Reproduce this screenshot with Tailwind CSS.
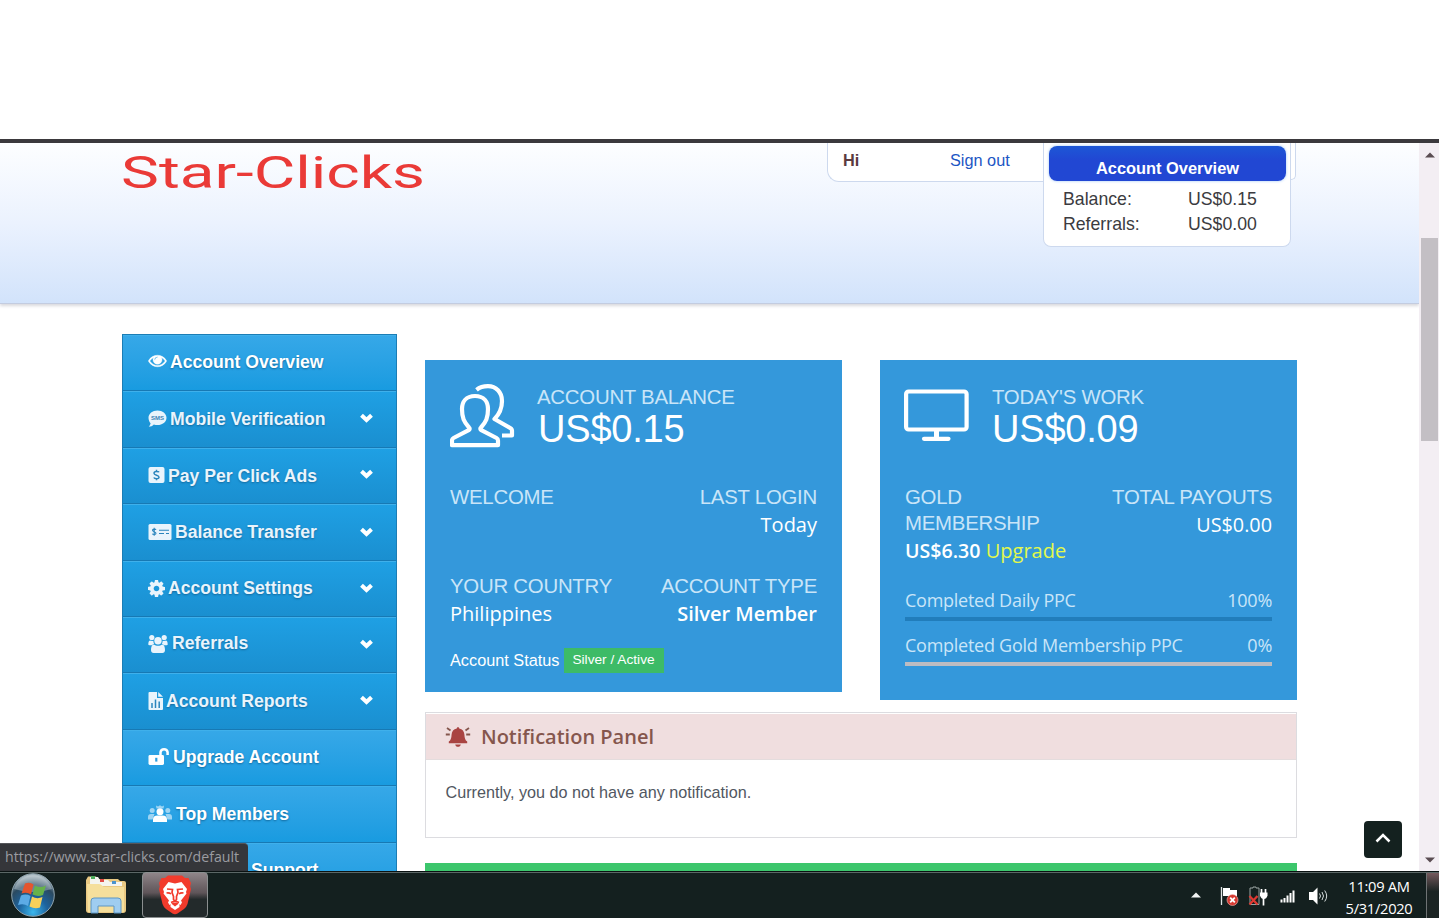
<!DOCTYPE html>
<html lang="en">
<head>
<meta charset="utf-8">
<title>Star-Clicks</title>
<script src="https://cdn.jsdelivr.net/npm/@tailwindcss/browser@4"></script>
</head>
<body class="w-[1439px] h-[918px] overflow-hidden bg-white flex flex-col font-['Liberation_Sans',sans-serif]">
<div class="h-[139px] shrink-0"></div>
<div class="h-1 shrink-0 bg-[#3b393d]"></div>

<div class="h-[728px] shrink-0 flex overflow-hidden relative">
  <div class="w-[1419px] shrink-0 h-full overflow-hidden">
    <!-- header -->
    <header class="h-[161px] border-b border-[#c3cce0] bg-linear-to-b from-[#fdfeff] via-[#ebf2fe] to-[#d2e3fb] shadow-[0_2px_3px_#d9d9de] pl-[122px] flex">
      <svg class="w-[306px] h-[50px] mt-1 shrink-0" viewBox="0 0 306 50"><text x="-1" y="40.500" textLength="304" lengthAdjust="spacingAndGlyphs" font-family="Roboto, sans-serif" font-size="44" font-weight="400" fill="#ea3a37">Star-Clicks</text></svg>
      <div class="ml-[399px] w-[216px] h-[39px] border-l border-b border-[#cdd9ee] rounded-bl-xl bg-white flex pl-[15px] text-[16.3px] leading-[35px]">
        <b class="text-[#5b3a40] w-[107px]">Hi</b><a class="text-[#1d56c4]">Sign out</a>
      </div>
      <div class="w-[248px] h-[104px] border-x border-b border-[#cdd9ee] rounded-b-lg bg-white pl-[5px] pr-1 pt-[3px] text-[17.7px] text-[#3b3b40]">
        <div class="h-[35px] rounded-lg bg-linear-to-b from-[#1d57d6] to-[#2147d3] to-40% shadow-[0_0_3px_#9cc6f5] text-white font-bold text-[16.4px] leading-[44px] text-center">Account Overview</div>
        <div class="pl-[14px] pt-[6px] leading-[25px]">
          <div class="flex"><span class="w-[125px]">Balance:</span><span>US$0.15</span></div>
          <div class="flex"><span class="w-[125px]">Referrals:</span><span>US$0.00</span></div>
        </div>
      </div>
      <div class="w-[5px] h-[37px] border-r border-b border-[#cdd9ee] rounded-br-lg bg-white"></div>
    </header>

    <div class="flex pl-[122px]">
      <!-- sidebar -->
      <nav class="w-[275px] mt-[30px] shrink-0 border border-b-0 border-[#1b7db5] text-[17.600px] font-bold text-white [text-shadow:0_1px_2px_#136a9f] *:h-[56.4px] *:border-b *:border-[#1779b4] *:pl-[25px] *:pr-[23px] *:flex *:items-center *:shadow-[inset_0_1px_0_#3fb0eb] *:bg-linear-to-b">
        <div class="from-[#36a8e8] to-[#189be0] pb-[2px]"><svg class="w-[19px] h-[18px] mr-[3px] mb-px" viewBox="0 64 1792 1792" fill="#fff" stroke="#fff" stroke-width="40"><path d="M1664 960q-152-236-381-353 61 104 61 225 0 185-131.500 316.500t-316.500 131.500-316.500-131.500-131.500-316.500q0-121 61-225-229 117-381 353 133 205 333.500 326.500t434.500 121.500 434.500-121.500 333.500-326.500zm-720-384q0-20-14-34t-34-14q-125 0-214.500 89.500t-89.500 214.500q0 20 14 34t34 14 34-14 14-34q0-86 61-147t147-61q20 0 34-14t14-34zm848 384q0 34-20 69-140 230-376.500 368.500t-499.500 138.500-499.500-139-376.500-368q-20-35-20-69t20-69q140-229 376.500-368t499.500-139 499.500 139 376.500 368q20 35 20 69z"/><circle cx="960" cy="880" r="260"/></svg>Account Overview</div>
        <div class="from-[#1fa0e4] to-[#1a8fd0] text-[#e9f4fc]"><svg class="w-[19px] h-[18px] mr-[3px]" viewBox="0 0 19 18"><path fill="#e9f4fc" d="M9.500.500C14.500.500 18.500 3.600 18.500 7.800s-4 7.300-9 7.300c-1.300 0-2.600-.2-3.700-.6C4.500 16 2.800 16.600.8 16.800c.9-1 1.600-2.200 1.800-3.500C1.300 12 .5 9.900.5 7.800.5 3.600 4.500.5 9.500.5z"/><text x="9.600" y="10" text-anchor="middle" font-size="6" font-weight="700" fill="#3b82b5" style="text-shadow:none">SMS</text></svg>Mobile Verification<svg class="w-[13px] h-[10px] ml-auto -mt-[3px]" viewBox="0 0 13 10"><path d="M1.500 2.200L6.500 7 11.500 2.200" fill="none" stroke="#fff" stroke-width="4"/></svg></div>
        <div class="from-[#1fa0e4] to-[#1a8fd0] text-[#e9f4fc]"><svg class="w-[17px] h-[18px] mr-[3px]" viewBox="0 0 17 18"><rect x=".5" y="1" width="16" height="16" rx="2" fill="#e9f4fc"/><path d="M11 6.300C10.500 5.200 6 4.800 6 7.200S11 9 11 11.200 6.500 13 5.800 11.500M8.500 3.800v1.500M8.500 12.500v1.700" fill="none" stroke="#2b85bd" stroke-width="1.500"/></svg><span class="pt-px">Pay Per Click Ads</span><svg class="w-[13px] h-[10px] ml-auto -mt-[3px]" viewBox="0 0 13 10"><path d="M1.500 2.200L6.500 7 11.500 2.200" fill="none" stroke="#fff" stroke-width="4"/></svg></div>
        <div class="from-[#1fa0e4] to-[#1a8fd0] text-[#e9f4fc]"><svg class="w-[24px] h-[18px] mr-[3px]" viewBox="0 0 24 18"><rect x=".5" y="1" width="23" height="16" rx="1.500" fill="#e9f4fc"/><path d="M8 6.800C7.500 5.700 4.500 6 4.500 7.300S8 8.700 8 10.200 5 11.800 4.300 10.800M6.200 4.800v8M11 7.300h10M11 10.500h5M18 10.500h3" fill="none" stroke="#2b85bd" stroke-width="1.100"/></svg>Balance Transfer<svg class="w-[13px] h-[10px] ml-auto" viewBox="0 0 13 10"><path d="M1.500 2.200L6.500 7 11.500 2.200" fill="none" stroke="#fff" stroke-width="4"/></svg></div>
        <div class="from-[#1fa0e4] to-[#1a8fd0] text-[#e9f4fc]"><svg class="w-[17px] h-[17px] mr-[3px]" viewBox="128 128 1536 1536" fill="#e9f4fc"><path d="M1152 896q0-106-75-181t-181-75-181 75-75 181 75 181 181 75 181-75 75-181zm512-109v222q0 12-8 23t-20 13l-185 28q-19 54-39 91 35 50 107 138 10 12 10 25t-9 23q-27 37-99 108t-94 71q-12 0-26-9l-138-108q-44 23-91 38-16 136-29 186-7 28-36 28h-222q-14 0-24.500-8.500t-11.500-21.500l-28-184q-49-16-90-37l-141 107q-10 9-25 9-14 0-25-11-126-114-165-168-7-10-7-23 0-12 8-23 15-21 51-66.500t54-70.500q-27-50-41-99l-183-27q-13-2-21-12.500t-8-23.500v-222q0-12 8-23t19-13l186-28q14-46 39-92-40-57-107-138-10-12-10-24 0-10 9-23 26-36 98.500-107.500t94.500-71.500q13 0 26 10l138 107q44-23 91-38 16-136 29-186 7-28 36-28h222q14 0 24.500 8.500t11.500 21.500l28 184q49 16 90 37l142-107q9-9 24-9 13 0 25 10 129 119 165 170 7 8 7 22 0 12-8 23-15 21-51 66.500t-54 70.500q26 50 41 98l183 28q13 2 21 12.500t8 23.500z"/></svg>Account Settings<svg class="w-[13px] h-[10px] ml-auto" viewBox="0 0 13 10"><path d="M1.500 2.200L6.500 7 11.500 2.200" fill="none" stroke="#fff" stroke-width="4"/></svg></div>
        <div class="from-[#1fa0e4] to-[#1a8fd0] text-[#e9f4fc] pb-[2px]"><svg class="w-[20px] h-[20px] mr-[4px]" viewBox="0 0 20 20" fill="#e9f4fc"><circle cx="3.800" cy="3.600" r="2.600"/><circle cx="16.200" cy="3.600" r="2.600"/><path d="M.3 10.500C.3 8 1 6.500 2.200 6.500c1.300.8 2.500.6 3.200.2 0 1.300.2 2.500 1 3.300-1 .1-1.700.5-2.300 1.200H1.500c-.8 0-1.200-.3-1.200-.7zM19.700 10.500c0-2.500-.7-4-1.900-4-1.300.8-2.500.6-3.200.2 0 1.300-.2 2.500-1 3.300 1 .1 1.700.5 2.300 1.200h2.600c.8 0 1.200-.3 1.200-.7z"/><circle cx="10" cy="6.800" r="3.700"/><path d="M5.800 10.500c2.500 1.800 6 1.800 8.400 0 2 .2 2.800 2.600 2.800 5.600 0 1.800-1 2.900-2.600 2.900H5.600C4 19 3 17.900 3 16.100c0-3 .8-5.400 2.800-5.600z"/></svg>Referrals<svg class="w-[13px] h-[10px] ml-auto" viewBox="0 0 13 10"><path d="M1.500 2.200L6.500 7 11.500 2.200" fill="none" stroke="#fff" stroke-width="4"/></svg></div>
        <div class="from-[#1fa0e4] to-[#1a8fd0] text-[#e9f4fc]"><svg class="w-[15px] h-[18px] mr-[3px] -mt-px" viewBox="0 0 15 18"><path fill="#e9f4fc" d="M1.500 0H9v6h6v11q0 1-1 1H1.500Q.5 18 .5 17V1q0-1 1-1zM10.200 0L15 4.800h-4.800z"/><path d="M4 16v-5M7.500 16V7.500M11.200 16V9.500" stroke="#2b85bd" stroke-width="1.500"/></svg>Account Reports<svg class="w-[13px] h-[10px] ml-auto -mt-[3px]" viewBox="0 0 13 10"><path d="M1.500 2.200L6.500 7 11.500 2.200" fill="none" stroke="#fff" stroke-width="4"/></svg></div>
        <div class="from-[#36a8e8] to-[#189be0]"><svg class="w-[21px] h-[20px] mr-[4px] -mt-[2px]" viewBox="0 0 21 20"><path d="M12.500 10V6.300a3.600 3.600 0 017.100 0V9" fill="none" stroke="#fff" stroke-width="2.500"/><rect x=".5" y="9" width="15.500" height="10" rx="1.400" fill="#fff"/><path d="M8.300 11.800v3.800" stroke="#2b9ddf" stroke-width="2.200"/></svg>Upgrade Account</div>
        <div class="from-[#36a8e8] to-[#189be0]"><svg class="w-[24px] h-[18px] mr-[4px]" viewBox="0 0 24 18"><g fill="#fff" fill-opacity=".55"><circle cx="4.200" cy="5.500" r="2.500"/><circle cx="19.800" cy="5.500" r="2.500"/><path d="M0 14.500V12q0-3 3-3h3.500l-2 5.500zM24 14.500V12q0-3-3-3h-3.500l2 5.500zM8 .5l2 1 2-1.200 2 1.200 2-1-.5 3h-7z"/></g><circle cx="12" cy="6.700" r="3.500" fill="#fff"/><path fill="#fff" d="M5 17v-2.500Q5 10.500 9.500 10.500h5q4.500 0 4.500 4V17z"/></svg>Top Members</div>
        <div class="from-[#36a8e8] to-[#189be0]"><span class="w-[103px]"></span>Support</div>
      </nav>

      <!-- content -->
      <main class="ml-[28px] w-[872px] mt-[56px] shrink-0">
        <div class="flex justify-between items-start">
          <section class="w-[417px] h-[332px] bg-[#3498db] px-[25px] pt-6 text-white">
            <div class="flex h-[99px]">
              <svg class="w-[65px] h-[65px] shrink-0" viewBox="0 0 65 65" fill="none" stroke="#fff" stroke-width="4.200" stroke-linejoin="round"><path d="M25 12C16 12 12 18 12 25c0 9 2 13 7 18.500 1 1 .8 2-.3 2.700L3.500 54q-1.500.8-1.500 2.500V61.200h46V56.500q0-1.700-1.500-2.500L31.300 46.200c-1.100-.7-1.300-1.700-.3-2.700C36 38 38 34 38 25 38 18 34 12 25 12z"/><path d="M26.500 5.800C30 3 34 2.200 38 2.200c8 0 14 6 14 14.800 0 8-3 13.500-7.500 18L61 44.500q1 1 1 2v5H52"/></svg>
              <div class="ml-[22px] -mt-px">
                <div class="text-[20.4px] tracking-[-0.25px] leading-7 text-[#c9e5f8] whitespace-nowrap">ACCOUNT BALANCE</div>
                <div class="text-[38px] tracking-[-0.2px] leading-[36px] pl-px">US$0.15</div>
              </div>
            </div>
            <div class="flex justify-between h-[89px] font-['Open_Sans',sans-serif] text-[20px] leading-7">
              <div><div class="text-[20.4px] tracking-[-0.25px] leading-7 text-[#c9e5f8] font-['Liberation_Sans',sans-serif]">WELCOME</div></div>
              <div class="text-right"><div class="text-[20.4px] tracking-[-0.25px] leading-7 text-[#c9e5f8] font-['Liberation_Sans',sans-serif]">LAST LOGIN</div>Today</div>
            </div>
            <div class="flex justify-between h-[74px] font-['Open_Sans',sans-serif] text-[20px] leading-7">
              <div><div class="text-[20.4px] tracking-[-0.25px] leading-7 text-[#c9e5f8] font-['Liberation_Sans',sans-serif]">YOUR COUNTRY</div>Philippines</div>
              <div class="text-right"><div class="text-[20.4px] tracking-[-0.25px] leading-7 text-[#c9e5f8] font-['Liberation_Sans',sans-serif]">ACCOUNT TYPE</div><span class="font-semibold">Silver Member</span></div>
            </div>
            <div class="flex items-center gap-1 text-[16.3px] h-[26px] mt-px"><span>Account Status</span><span class="bg-[#3dbb67] h-[25px] w-[100px] mt-px text-center text-[13.7px] leading-[24px]">Silver / Active</span></div>
          </section>

          <section class="w-[417px] h-[340px] bg-[#3498db] px-[25px] pt-6 text-white font-['Open_Sans',sans-serif]">
            <div class="flex h-[99px] font-['Liberation_Sans',sans-serif]">
              <svg class="w-[65px] h-[65px] shrink-0 -ml-px" viewBox="0 0 65 65" fill="none" stroke="#fff" stroke-width="4.200"><rect x="2.100" y="7.500" width="60.500" height="38" rx="2.500"/><path d="M32.500 46v8" stroke-width="5"/><path d="M20 54.800h24.500" stroke-linecap="round"/></svg>
              <div class="ml-[23px] -mt-px">
                <div class="text-[20.4px] tracking-[-0.25px] leading-7 text-[#c9e5f8] whitespace-nowrap">TODAY'S WORK</div>
                <div class="text-[38px] tracking-[-0.2px] leading-[36px]">US$0.09</div>
              </div>
            </div>
            <div class="flex justify-between h-[104px] text-[20px] leading-7">
              <div class="w-[170px]"><div class="text-[20.4px] tracking-[-0.25px] leading-[26px] pt-px pb-px text-[#c9e5f8] font-['Liberation_Sans',sans-serif]">GOLD<br>MEMBERSHIP</div><span class="font-semibold text-[19.600px]">US$6.30</span> <span class="text-[#e3f94c]">Upgrade</span></div>
              <div class="text-right"><div class="text-[20.4px] tracking-[-0.25px] leading-7 text-[#c9e5f8] font-['Liberation_Sans',sans-serif]">TOTAL PAYOUTS</div><span class="text-[19.8px]">US$0.00</span></div>
            </div>
            <div class="text-[18px] leading-[26px] text-[#c9e5f8] tracking-[-0.260px]">
              <div class="flex justify-between"><span>Completed Daily PPC</span><span>100%</span></div>
              <div class="h-1 bg-[#217dbb] mt-1"></div>
              <div class="flex justify-between mt-[11px]"><span>Completed Gold Membership PPC</span><span>0%</span></div>
              <div class="h-1 bg-[#bcbcc2] mt-1"></div>
            </div>
          </section>
        </div>

        <section class="mt-3 h-[126px] border border-[#dcdce0] pt-px bg-white">
          <div class="h-[46px] bg-[#f0dedf] border-b border-[#e4dcdd] pl-[19px] flex items-center font-['Open_Sans',sans-serif] font-semibold text-[20px] text-[#85564d]">
            <svg class="w-[26px] h-[22px] mr-[10px]" viewBox="0 0 26 22"><path fill="#a94442" d="M13 1.200c.8 0 1.200.5 1.200 1.200 3.300.6 5 3 5.200 6 .2 3.600.7 5.600 2.800 7.200v1.600H3.800v-1.600c2.100-1.600 2.600-3.600 2.800-7.200.2-3 1.900-5.400 5.200-6 0-.7.400-1.200 1.200-1.200zM10.200 18.500h5.600c-.3 1.400-1.400 2.300-2.800 2.300s-2.500-.9-2.800-2.300z"/><path d="M.8 8.500h4M21.200 8.500h4M2 2l3.500 2.500M24 2l-3.500 2.500" stroke="#85564d" stroke-width="1.800"/></svg>Notification Panel</div>
          <div class="pl-[19.5px] pt-[21px] text-[16.2px] leading-[22px] text-[#515761]">Currently, you do not have any notification.</div>
        </section>
        <div class="mt-[25px] h-5 bg-[#3cc66c]"></div>
      </main>
    </div>
  </div>

  <!-- scrollbar -->
  <div class="w-5 bg-[#f3eef3] flex flex-col items-center pl-px">
    <svg class="w-[10px] h-[6px] mt-[9px]" viewBox="0 0 10 6"><path d="M0 5.500L5 .5l5 5z" fill="#5a4d52"/></svg>
    <div class="w-[17px] h-[203px] mt-[80px] bg-[#c3bfc4]"></div>
    <svg class="w-[10px] h-[6px] mt-auto mb-[8px]" viewBox="0 0 10 6"><path d="M0 .5L5 5.500l5-5z" fill="#5a4d52"/></svg>
  </div>

  <button class="absolute left-[1364px] top-[678px] w-[38px] h-[37px] rounded bg-[#14211f] flex items-center justify-center"><svg class="w-4 h-[10px] -mt-1" viewBox="0 0 16 10"><path d="M1.500 8.500L8 2l6.500 6.500" fill="none" stroke="#fff" stroke-width="2.500"/></svg></button>
  <div class="absolute left-0 bottom-0 w-[248px] h-[28px] bg-[#35363a] rounded-tr border-t border-[#55565a] pl-[5px] font-['Open_Sans',sans-serif] text-[14.2px] leading-[26px] text-[#9b9ca1] whitespace-nowrap">https://www.star-clicks.com/default</div>
</div>

<!-- taskbar -->
<footer class="h-[47px] shrink-0 bg-[#14201f] border-t border-[#0a1212] shadow-[inset_0_1px_0_#5b6766] flex items-center pl-[10px] relative">
  <svg class="w-[46px] h-[46px]" viewBox="0 0 46 46"><defs><radialGradient id="orb" cx=".5" cy=".9" r=".85"><stop offset="0" stop-color="#3cb8ee"/><stop offset=".4" stop-color="#1d639e"/><stop offset=".75" stop-color="#2b4a60"/><stop offset="1" stop-color="#a9b8c0"/></radialGradient></defs><circle cx="23" cy="23" r="21.300" fill="url(#orb)" stroke="#8fa3ad"/><path d="M4 17a20 20 0 0138 0Q23 23 4 17z" fill="#dfe7ea" opacity=".35"/><path d="M15 11.500q5-2 8.500 1L21 22.500q-4-3-9.500-1z" fill="#e5552e"/><path d="M25 13.500q5 3 11 0L33 23q-5 2-10.500-.5z" fill="#67b24a"/><path d="M11 23.500q5-2 9.500.500L18 34q-4.500-3-10-1z" fill="#5cabe6"/><path d="M22 24.500q5 3 10.500.500L30 35.500q-5 2-10.500-1z" fill="#f7d05a"/></svg>
  <svg class="w-[42px] h-[40px] ml-[29px]" viewBox="0 0 42 40"><path d="M1 5l2-3.500h8L13 4h20l2 2h4q2 0 2 2v27q0 3-3 3H4q-3 0-3-3z" fill="#e9c983"/><path d="M5 2h8l2 3h8l2 2h12v4H5z" fill="#f4f4ee"/><path d="M6 1h4v3H6z" fill="#4fae5e"/><path d="M15 4h4v3h-4z" fill="#e04b45"/><path d="M27 6h4v3h-4z" fill="#4b93cd"/><path d="M2 9h12q2 0 3 1.500T20 12h19v25H3z" fill="#f5df9c"/><path d="M6 38V26q0-3 3-3h24q3 0 3 3v12h-7v-7H13v7z" fill="#9fcdf0" stroke="#5c96c4"/></svg>
  <div class="ml-[15px] w-[66px] h-[46px] border border-[#8b8f90] rounded-sm bg-linear-to-b from-[#8f8589] via-[#5f5559] via-45% to-[#232a2b] to-60% flex items-center justify-center">
    <svg class="w-[34px] h-[40px]" viewBox="0 0 34 40"><path d="M10 .5h14l3 2.500h3.500L33 8l-.8 3.500L33 14l-3.500 15q-1 3-3.500 5l-6.500 4.500q-2.500 1.500-5 0L8 34q-2.500-2-3.500-5L1 14l.8-2.500L1 8l2.500-5H7z" fill="#f23b2c"/><path d="M10.500 7L17 8.500 23.500 7l5.500 7-1 3 .5 1.500-5.500 7 1 2-1.500 2.500-3.500-2.500h-4L11.500 30 10 27.500l1-2-5.500-7L6 17l-1-3z" fill="#fff"/><path d="M12.500 28l4.500 3.500 4.500-3.500v4L17 35l-4.500-3z" fill="#fff"/><path d="M9 14l5.500.5-.5 3 1.500 4v3L17 26l1.500-1.500v-3l1.500-4-.5-3L25 14" fill="none" stroke="#f23b2c" stroke-width="1.700"/><path d="M8.500 18q3-.5 4.500 1M25.500 18q-3-.5-4.500 1M13 27.500l4-1.500 4 1.500" fill="none" stroke="#f23b2c" stroke-width="1.700"/></svg>
  </div>
  <svg class="w-[10px] h-[6px] ml-[983px]" viewBox="0 0 10 6"><path d="M0 5.500L5 .5l5 5z" fill="#f1f3f3"/></svg>
  <svg class="w-[20px] h-[20px] ml-[19px] mt-px shrink-0" viewBox="0 0 20 20"><path d="M1.500 1v18" stroke="#dfe5e5" stroke-width="1.300"/><path d="M3 2h7v2h7v6H3z" fill="#fff"/><circle cx="12.500" cy="14" r="5.500" fill="#d63a31" stroke="#f2b9b5" stroke-width=".6"/><path d="M10.200 11.700l4.600 4.600m0-4.600l-4.600 4.600" stroke="#fff" stroke-width="1.800"/></svg>
  <svg class="w-[20px] h-[20px] ml-[8px] mt-px shrink-0" viewBox="0 0 20 20"><path d="M5 2V1h3v1h3v16.500H2V2z" fill="none" stroke="#9aa3a3"/><path d="M13.500 3v5M17.500 3v5M15.500 12v7.500" stroke="#fff" stroke-width="1.700"/><path d="M12 6.500h7.500v3q-1 3.500-3.700 3.500T12 9.500z" fill="#fff"/><path d="M1.500 10l8 8.500m0-8.500l-8 8.500" stroke="#e03831" stroke-width="2.300"/></svg>
  <svg class="w-[16px] h-[14px] ml-[12px] mt-px shrink-0" viewBox="0 0 16 14"><path d="M1.500 13.500v-3M4.500 13.500V9M7.500 13.500V6.500M10.500 13.500V4M13.500 13.500V1.500" stroke="#fff" stroke-width="2"/></svg>
  <svg class="w-[20px] h-[18px] ml-[12px] mt-px shrink-0" viewBox="0 0 20 18"><path d="M1 5h4l4.500-4.500v17L5 13H1z" fill="#fff"/><path d="M11.500 6.500q2 2.500 0 5M14 5q3 4 0 8M16.700 3.500q4 5.500 0 11" fill="none" stroke="#d7dede"/></svg>
  <div class="ml-[11px] w-[80px] shrink-0 pt-[3px] text-center text-white font-['Open_Sans',sans-serif] text-[14.7px] tracking-[-0.3px] leading-[22px]">11:09 AM<br>5/31/2020</div>
  <div class="absolute right-0 top-px w-[13px] h-[46px] border-l border-[#6f7374] bg-linear-to-b from-[#75595d] to-[#1b2423] to-40%"></div>
</footer>
</body>
</html>
